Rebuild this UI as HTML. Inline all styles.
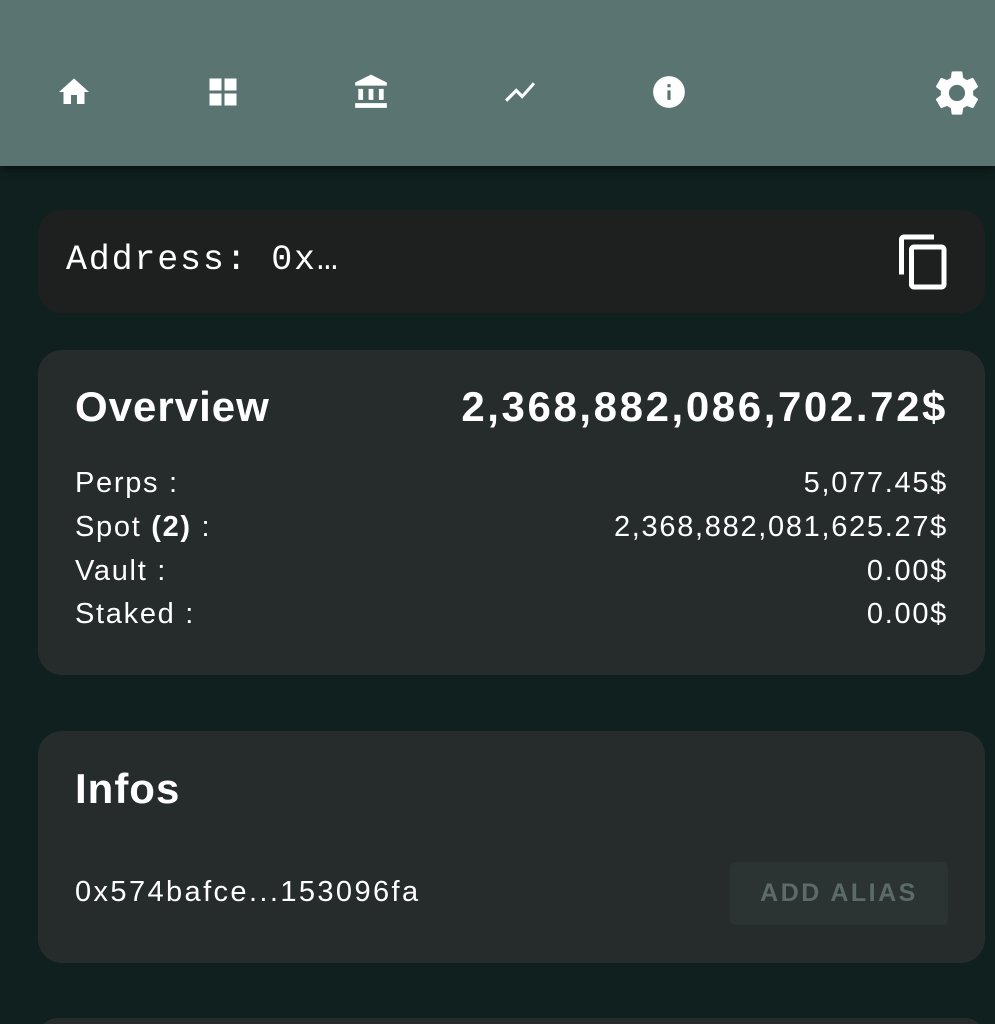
<!DOCTYPE html>
<html><head><meta charset="utf-8"><style>
*{margin:0;padding:0;box-sizing:border-box}
html,body{width:995px;height:1024px;overflow:hidden}
body{background:#0f201e;font-family:"Liberation Sans",sans-serif;color:#fff;position:relative}
.hdr{position:absolute;left:0;top:0;width:995px;height:166px;background:#5a7571;box-shadow:0 3px 8px rgba(0,0,0,.5)}
.ic{position:absolute;fill:#fff}
.card{position:absolute;left:38px;width:947px;border-radius:24px}
.t{position:absolute;white-space:nowrap;line-height:1}
.r{right:39px;text-align:right}
.row{font-size:29px;letter-spacing:1.7px}
.big{font-size:42px;font-weight:bold;letter-spacing:1px}
</style></head><body>
<div class="hdr">
<svg class="ic" style="left:56px;top:74px" width="36" height="36" viewBox="0 0 24 24"><path d="M10 20v-6h4v6h5v-8h3L12 3 2 12h3v8z"/></svg>
<svg class="ic" style="left:205px;top:74px" width="36" height="36" viewBox="0 0 24 24"><path d="M3 3h8v8H3zM13 3h8v8h-8zM3 13h8v8H3zM13 13h8v8h-8z"/></svg>
<svg class="ic" style="left:352px;top:73px" width="38" height="38" viewBox="0 0 24 24"><path d="M4 10h3v7H4zm6.5 0h3v7h-3zM2 19h20v3H2zm15-9h3v7h-3zm-5-9L2 6v2h20V6z"/></svg>
<svg class="ic" style="left:502px;top:74px" width="36" height="36" viewBox="0 0 24 24"><path d="M3.5 18.49l6-6.01 4 4L22 6.92l-1.41-1.41-7.09 7.97-4-4L2 16.99z"/></svg>
<svg class="ic" style="left:650px;top:73px" width="38" height="38" viewBox="0 0 24 24"><path d="M12 2C6.480 2 2 6.48 2 12s4.48 10 10 10 10-4.48 10-10S17.52 2 12 2zm1 15h-2v-6h2v6zm0-8h-2V7h2v2z"/></svg>
<svg class="ic" style="left:930px;top:66px" width="54" height="54" viewBox="0 0 24 24"><path d="M19.14 12.94c.04-.3.06-.61.06-.94 0-.32-.02-.64-.07-.94l2.030-1.58a.49.49 0 00.12-.61l-1.92-3.32a.488.488 0 00-.59-.22l-2.39.96c-.5-.38-1.03-.7-1.62-.94l-.36-2.54a.484.484 0 00-.48-.41h-3.84c-.24 0-.43.17-.47.41l-.36 2.54c-.59.24-1.13.57-1.62.94l-2.39-.96c-.22-.08-.47 0-.59.22L2.74 8.87c-.12.21-.08.47.12.61l2.03 1.58c-.05.3-.09.63-.09.94s.02.64.07.94l-2.03 1.58a.49.49 0 00-.12.61l1.92 3.32c.12.22.37.29.59.22l2.39-.96c.5.38 1.03.7 1.62.94l.36 2.54c.05.24.24.41.48.41h3.84c.24 0 .44-.17.47-.41l.36-2.540c.59-.24 1.13-.56 1.62-.94l2.39.96c.22.08.47 0 .59-.22l1.92-3.32c.12-.22.07-.47-.12-.61l-2.01-1.58zM12 15.6c-1.98 0-3.6-1.62-3.6-3.6s1.62-3.6 3.6-3.6 3.6 1.62 3.6 3.6-1.62 3.6-3.6 3.6z"/></svg>
</div>

<div class="card" style="top:210px;height:103px;background:#1e1f1f">
<div class="t" style="left:28px;top:33px;font-family:'Liberation Mono','DejaVu Sans Mono',monospace;font-size:35px;letter-spacing:1.8px">Address: 0x…</div>
<svg class="ic" style="left:856px;top:22px" width="60" height="60" viewBox="0 0 24 24"><path d="M16 1H4c-1.1 0-2 .9-2 2v14h2V3h12V1zm3 4H8c-1.1 0-2 .9-2 2v14c0 1.1.9 2 2 2h11c1.1 0 2-.9 2-2V7c0-1.1-.9-2-2-2zm0 16H8V7h11v14z"/></svg>
</div>

<div class="card" style="top:350px;height:325px;background:#262c2c">
<div class="t big" style="left:37px;top:36px">Overview</div>
<div class="t r big" style="top:36px;letter-spacing:2.6px;right:37px">2,368,882,086,702.72$</div>
<div class="t row" style="left:37px;top:119px">Perps :</div>
<div class="t r row" style="top:119px;right:37px">5,077.45$</div>
<div class="t row" style="left:37px;top:163px">Spot <b>(2)</b> :</div>
<div class="t r row" style="top:163px;right:37px">2,368,882,081,625.27$</div>
<div class="t row" style="left:37px;top:207px">Vault :</div>
<div class="t r row" style="top:207px;right:37px">0.00$</div>
<div class="t row" style="left:37px;top:250px">Staked :</div>
<div class="t r row" style="top:250px;right:37px">0.00$</div>
</div>

<div class="card" style="top:731px;height:232px;background:#262c2c">
<div class="t big" style="left:37px;top:37px">Infos</div>
<div class="t row" style="left:37px;top:147px;letter-spacing:2.4px">0x574bafce...153096fa</div>
<div style="position:absolute;left:692px;top:131px;width:218px;height:63px;background:#2c3433;border-radius:6px;color:#5c6b68;font-size:25px;font-weight:bold;letter-spacing:2.5px;text-align:center;line-height:63px">ADD ALIAS</div>
</div>

<div class="card" style="top:1018px;height:40px;background:#262c2c"></div>
</body></html>
